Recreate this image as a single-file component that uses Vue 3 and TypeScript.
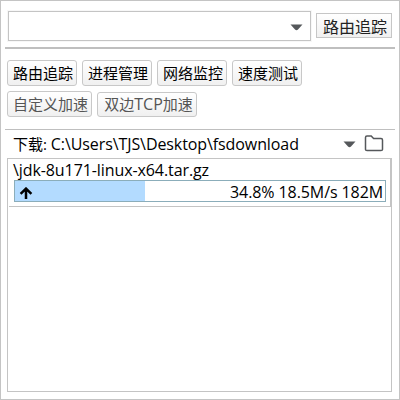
<script setup lang="ts">
import { ref } from 'vue'

interface Tool { label: string; muted?: boolean; kind: string }

const primary: Tool[] = [
  { label: '路由追踪', kind: 'std' },
  { label: '进程管理', kind: 'std' },
  { label: '网络监控', kind: 'std' },
  { label: '速度测试', kind: 'std' },
]
const file = ref({ name: '\\jdk-8u171-linux-x64.tar.gz', percent: 34.8, speed: '18.5M/s', size: '182M' })
const path = 'C:\\Users\\TJS\\Desktop\\fsdownload'
</script>

<template>
  <div class="panel">
    <div class="top">
      <div class="combo">
        <svg width="13" height="7" viewBox="0 0 13 7"><path d="M0.5 0.5H12.5L8 5.6Q6.5 7 5 5.6Z" fill="#55585b" /></svg>
      </div>
      <button class="trace">路由追踪</button>
    </div>
    <div class="rule thick"></div>
    <div class="tools">
      <button v-for="t in primary" :key="t.label" class="tool" :class="t.kind">{{ t.label }}</button>
    </div>
    <div class="tools second">
      <button class="tool muted boost">自定义加速</button>
      <button class="tool muted tcp">双边<span class="latin">TCP</span>加速</button>
    </div>
    <div class="rule"></div>
    <div class="location">
      <span class="path">下载: <span class="latin">{{ path }}</span></span>
      <svg class="caret" width="13" height="7" viewBox="0 0 13 7"><path d="M0.5 0.5H12.5L8 5.6Q6.5 7 5 5.6Z" fill="#55585b" /></svg>
      <svg class="folder" width="20" height="18" viewBox="0 0 20 18">
        <path d="M1.5 14.5V2.5Q1.5 1 3 1H7.2L9.6 3.6H17Q18.5 3.6 18.5 5V14.5Q18.5 15.5 17 15.5H3Q1.5 15.5 1.5 14.5Z" fill="none" stroke="#55585b" stroke-width="1.5" />
      </svg>
    </div>
    <div class="list">
      <div class="item">
        <div class="name latin">{{ file.name }}</div>
        <div class="bar">
          <div class="fill" :style="{ width: file.percent + '%' }">
            <svg width="14" height="12" viewBox="0 0 14 12"><path d="M7 12V2M1.6 6.9L7 1.6L12.4 6.9" fill="none" stroke="#000" stroke-width="2.5" /></svg>
          </div>
          <span class="stats latin">{{ file.percent }}% {{ file.speed }} {{ file.size }}</span>
        </div>
      </div>
    </div>
  </div>
</template>

<style>
body { background: #fff; }
</style>

<style scoped>
* { box-sizing: border-box; }
.panel {
  width: 400px; height: 400px; border: 1px solid #c4c4c4; background: #fff; color: #000;
  padding: 10px 4px 0; display: flex; flex-direction: column;
  font-family: "Open Sans", "Noto Sans CJK SC", sans-serif; font-size: 15px; overflow: hidden;
}
button {
  font-family: "Noto Sans CJK SC", sans-serif; padding: 0; margin: 0; color: #000; white-space: nowrap;
  border: 1px solid #c6c6c6; background: linear-gradient(#fff, #f0f0f0);
  display: flex; align-items: center; justify-content: center;
}
.latin { font-family: "Open Sans", sans-serif; font-size: 16px; letter-spacing: -0.09px; }
.top { display: flex; gap: 5px; padding-left: 3px; height: 36px; flex: none; }
.combo {
  width: 303px; height: 30px; border: 1px solid #c4c4c4; display: flex; align-items: center;
  justify-content: flex-end; padding-right: 7px; padding-top: 2px; box-shadow: 0 0 0 1px #f7f7f7;
}
.trace { width: 76px; height: 25px; margin-top: 2px; font-size: 16px; color: #222; line-height: 23px; padding: 2px 0 0 2px; }
.rule { height: 1px; background: #bfbfbf; flex: none; }
.thick { height: 2px; }
.tools { display: flex; gap: 5px; padding: 11px 0 0 2px; height: 37px; flex: none; }
.second { height: 43px; padding-top: 5px; }
.tool { height: 26px; font-size: 15px; line-height: 24px; border-radius: 3px; border-color: #c8c8c8; padding: 0 0 1px 2px; }
.std { width: 70px; }
.boost { width: 85px; }
.tcp { width: 100px; height: 25px; margin-top: 1px; padding-left: 3px; }
.tcp .latin { letter-spacing: 0; }
.muted { color: #555; }
.location { height: 28px; display: flex; align-items: center; padding-left: 8px; flex: none; }
.path { width: 330px; line-height: 28px; white-space: pre; }
.caret { margin-top: 1px; }
.folder { margin-left: 8px; }
.list { width: 385px; height: 234px; margin-left: 2px; border: 1px solid #c4c4c4; flex: none; }
.item { height: 48px; border-right: 1px solid #c4c4c4; border-bottom: 1px solid #c4c4c4; margin-left: 1px; padding-left: 5px; }
.name { height: 21px; line-height: 22px; white-space: nowrap; margin-left: -1px; }
.bar { width: 372px; height: 22px; border: 1px solid #8badba; display: flex; justify-content: space-between; }
.fill { min-width: 130px; background: #b3dbff; display: flex; align-items: center; padding: 3px 0 0 4px; }
.stats { line-height: 22px; padding-right: 2px; white-space: nowrap; }
</style>
